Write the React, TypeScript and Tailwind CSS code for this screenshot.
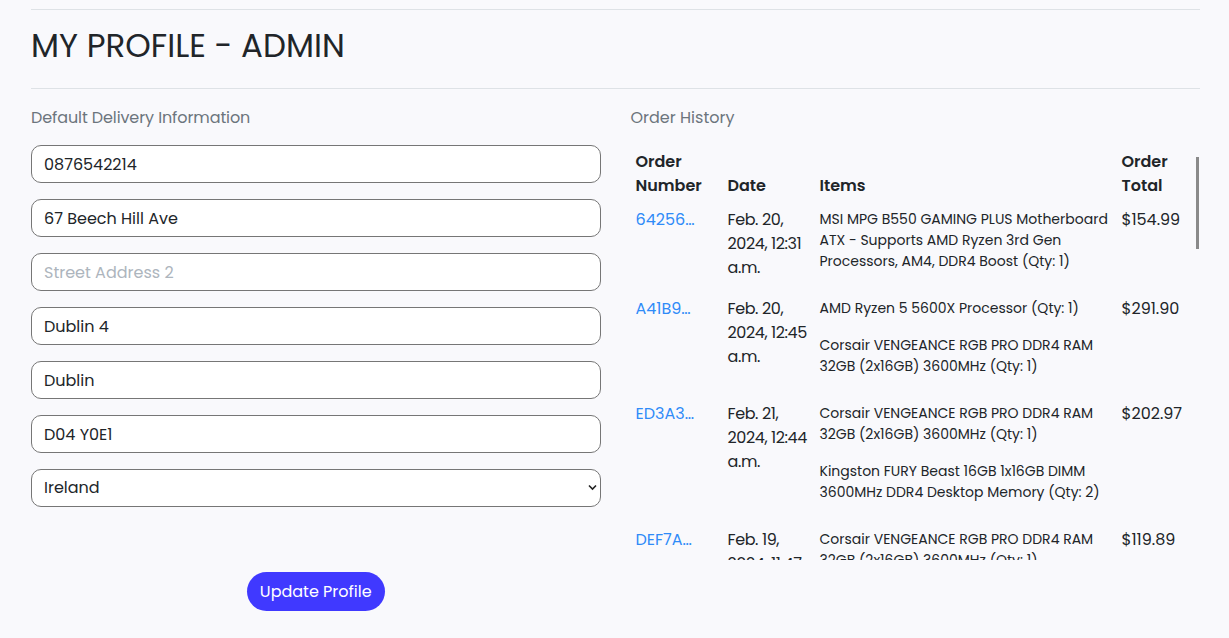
import React from 'react';

const ORDERS = [
  {
    id: '64256a1f',
    date: 'Feb. 20, 2024, 12:31 a.m.',
    items: ['MSI MPG B550 GAMING PLUS Motherboard ATX - Supports AMD Ryzen 3rd Gen Processors, AM4, DDR4 Boost (Qty: 1)'],
    total: '$154.99',
  },
  {
    id: 'A41B9c2e',
    date: 'Feb. 20, 2024, 12:45 a.m.',
    items: ['AMD Ryzen 5 5600X Processor (Qty: 1)', 'Corsair VENGEANCE RGB PRO DDR4 RAM 32GB (2x16GB) 3600MHz (Qty: 1)'],
    total: '$291.90',
  },
  {
    id: 'ED3A3b71',
    date: 'Feb. 21, 2024, 12:44 a.m.',
    items: [
      'Corsair VENGEANCE RGB PRO DDR4 RAM 32GB (2x16GB) 3600MHz (Qty: 1)',
      'Kingston FURY Beast 16GB 1x16GB DIMM 3600MHz DDR4 Desktop Memory (Qty: 2)',
    ],
    total: '$202.97',
  },
  {
    id: 'DEF7A9d0',
    date: 'Feb. 19, 2024, 11:47 p.m.',
    items: ['Corsair VENGEANCE RGB PRO DDR4 RAM 32GB (2x16GB) 3600MHz (Qty: 1)', 'AMD Ryzen 5 5600X Processor (Qty: 1)'],
    total: '$119.89',
  },
];

const FIELDS = [
  { value: '0876542214', placeholder: 'Phone Number' },
  { value: '67 Beech Hill Ave', placeholder: 'Street Address 1' },
  { value: '', placeholder: 'Street Address 2' },
  { value: 'Dublin 4', placeholder: 'Town or City' },
  { value: 'Dublin', placeholder: 'County' },
  { value: 'D04 Y0E1', placeholder: 'Postcode' },
];

const font = "font-['Poppins','Inter','Noto_Sans',sans-serif]";

export default function App() {
  return (
    <div className={`min-h-screen bg-[#f9f9fc] text-[#212529] ${font}`}>
      <div className="pl-[31px] pr-[29px] pt-[9px]">
        <div className="border-t border-[#dee2e6]" />
        <h1 className="mt-[16px] text-[32.5px] leading-[40px] font-normal">MY PROFILE - ADMIN</h1>
        <div className="mt-[22px] border-t border-[#dee2e6]" />

        <div className="grid grid-cols-2 gap-[30px] mt-[17px]">
          {/* Delivery info */}
          <div>
            <p className="text-[16px] leading-[24px] text-[#6c757d] tracking-[-0.1px]">Default Delivery Information</p>
            <form className="mt-[15px] flex flex-col gap-[16px]">
              {FIELDS.map(f => (
                <input
                  key={f.placeholder}
                  defaultValue={f.value}
                  placeholder={f.placeholder}
                  className="h-[38px] w-full rounded-[10px] border border-[#767676] bg-white px-[12px] text-[16px] text-[#212529] placeholder:text-[#adb5bd] outline-none"
                />
              ))}
              <div className="relative">
                <select
                  defaultValue="IE"
                  className="h-[38px] w-full appearance-none rounded-[10px] border border-[#767676] bg-white px-[12px] text-[16px] text-[#212529] outline-none"
                >
                  <option value="IE">Ireland</option>
                </select>
                <svg className="pointer-events-none absolute right-[4px] top-[15px]" width="9" height="7" viewBox="0 0 9 7">
                  <path d="M1 1.5 L4.5 5 L8 1.5" fill="none" stroke="#222" strokeWidth="1.6" />
                </svg>
              </div>
              <div className="flex justify-center mt-[49px]">
                <button type="button" className="h-[39px] w-[138px] rounded-full bg-[#4039ff] text-white text-[16px]">
                  Update Profile
                </button>
              </div>
            </form>
          </div>

          {/* Order history */}
          <div>
            <p className="text-[16px] leading-[24px] text-[#6c757d]">Order History</p>
            <div className="relative mt-[16px] h-[414px] overflow-hidden">
              <table className="w-[563px] table-fixed border-collapse">
                <colgroup>
                  <col className="w-[92px]" />
                  <col className="w-[92px]" />
                  <col className="w-[302px]" />
                  <col />
                </colgroup>
                <thead>
                  <tr className="align-bottom text-left">
                    <th className="px-[5px] py-[4px] text-[16px] leading-[24px] font-semibold">Order Number</th>
                    <th className="px-[5px] py-[4px] text-[16px] leading-[24px] font-semibold">Date</th>
                    <th className="px-[5px] py-[4px] text-[16px] leading-[24px] font-semibold">Items</th>
                    <th className="px-[5px] py-[4px] text-[16px] leading-[24px] font-semibold">Order Total</th>
                  </tr>
                </thead>
                <tbody>
                  {ORDERS.map(o => (
                    <tr key={o.id} className="align-top">
                      <td className="px-[5px] pt-[6px] pb-[4px] text-[16px] leading-[24px]">
                        <a href="#" className="block w-[60px] truncate text-[#2f8bf8]">{o.id}</a>
                      </td>
                      <td className="px-[5px] pt-[6px] pb-[4px] text-[16px] leading-[24px] tracking-[-0.4px]">{o.date}</td>
                      <td className="px-[5px] pt-[7px] pb-[3px] text-[14px] leading-[21px]">
                        {o.items.map((it, i) => (
                          <p key={i} className="mb-[16px]">{it}</p>
                        ))}
                      </td>
                      <td className="px-[5px] pt-[6px] pb-[4px] text-[16px] leading-[24px]">{o.total}</td>
                    </tr>
                  ))}
                </tbody>
              </table>
              <div className="absolute right-[1px] top-[11px] h-[92px] w-[3px] bg-[#8a8a8a]" />
            </div>
          </div>
        </div>
      </div>
    </div>
  );
}
